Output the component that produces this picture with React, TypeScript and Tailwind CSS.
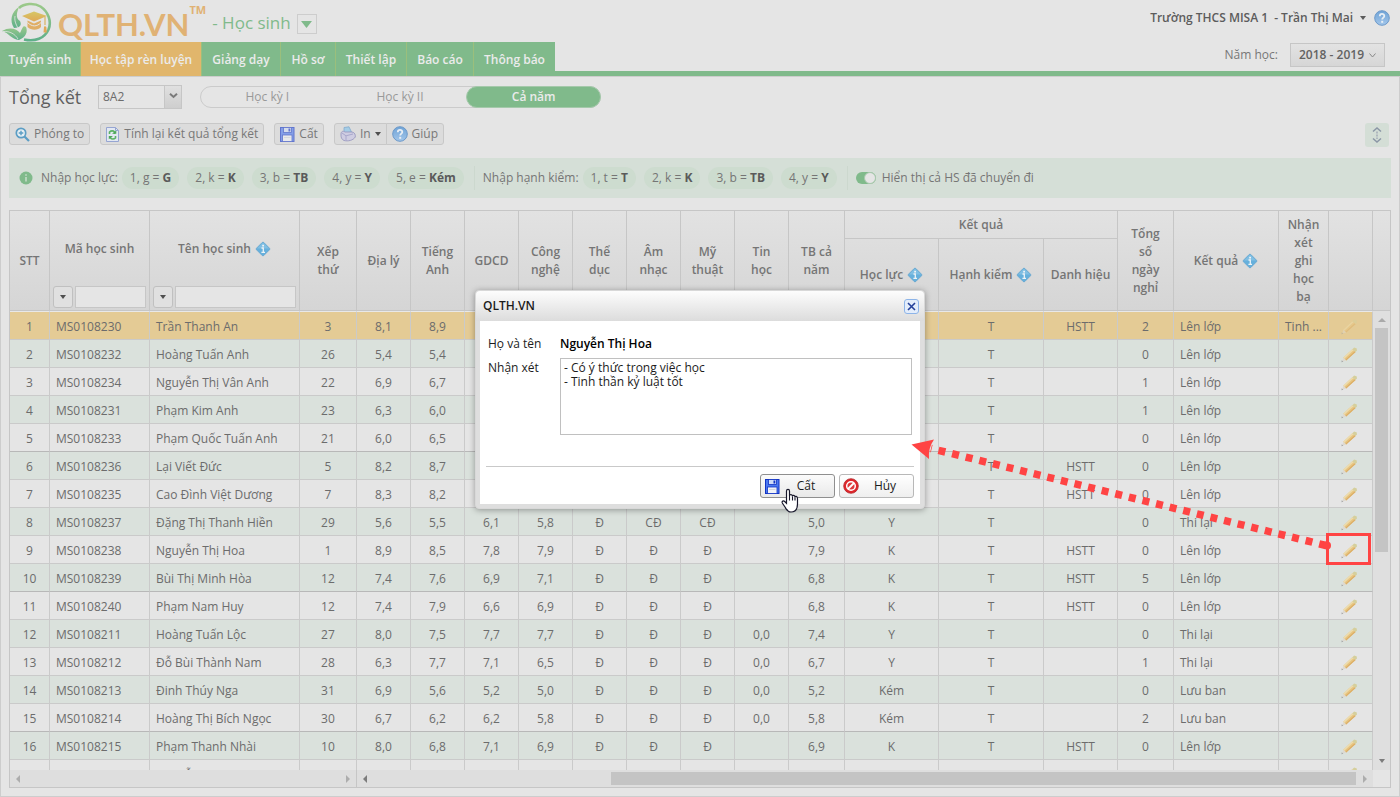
import { ReactNode } from "react";

type Row = {
    code: string;
    name: string;
    rank: string;
    marks: string[];
    result: string[];
    note?: string;
};

const tabs = [
    { label: "Tuyển sinh", width: "w-[81px]" },
    { label: "Học tập rèn luyện", width: "w-[121px]", active: true },
    { label: "Giảng dạy", width: "w-[79px]" },
    { label: "Hồ sơ", width: "w-[55px]" },
    { label: "Thiết lập", width: "w-[71px]" },
    { label: "Báo cáo", width: "w-[67px]" },
    { label: "Thông báo", width: "w-[81px]" },
];

const studyKeys = [["1, g", "G"], ["2, k", "K"], ["3, b", "TB"], ["4, y", "Y"], ["5, e", "Kém"]];
const conductKeys = [["1, t", "T"], ["2, k", "K"], ["3, b", "TB"], ["4, y", "Y"]];

const subjects = ["Địa lý", "Tiếng Anh", "GDCD", "Công nghệ", "Thể dục", "Âm nhạc", "Mỹ thuật", "Tin học"];

// marks: the eight subjects, then the average of the year
// result: study, conduct, title, days off, outcome
const rows: Row[] = [
    { code: "MS0108230", name: "Trần Thanh An", rank: "3", marks: ["8,1", "8,9", "", "", "", "", "", "", ""], result: ["", "T", "HSTT", "2", "Lên lớp"], note: "Tinh ..." },
    { code: "MS0108232", name: "Hoàng Tuấn Anh", rank: "26", marks: ["5,4", "5,4", "", "", "", "", "", "", ""], result: ["", "T", "", "0", "Lên lớp"] },
    { code: "MS0108234", name: "Nguyễn Thị Vân Anh", rank: "22", marks: ["6,9", "6,7", "", "", "", "", "", "", ""], result: ["", "T", "", "1", "Lên lớp"] },
    { code: "MS0108231", name: "Phạm Kim Anh", rank: "23", marks: ["6,3", "6,0", "", "", "", "", "", "", ""], result: ["", "T", "", "1", "Lên lớp"] },
    { code: "MS0108233", name: "Phạm Quốc Tuấn Anh", rank: "21", marks: ["6,0", "6,5", "", "", "", "", "", "", ""], result: ["", "T", "", "0", "Lên lớp"] },
    { code: "MS0108236", name: "Lại Viết Đức", rank: "5", marks: ["8,2", "8,7", "", "", "", "", "", "", ""], result: ["", "T", "HSTT", "0", "Lên lớp"] },
    { code: "MS0108235", name: "Cao Đình Việt Dương", rank: "7", marks: ["8,3", "8,2", "", "", "", "", "", "", ""], result: ["", "T", "HSTT", "0", "Lên lớp"] },
    { code: "MS0108237", name: "Đặng Thị Thanh Hiền", rank: "29", marks: ["5,6", "5,5", "6,1", "5,8", "Đ", "CĐ", "CĐ", "", "5,0"], result: ["Y", "T", "", "0", "Thi lại"] },
    { code: "MS0108238", name: "Nguyễn Thị Hoa", rank: "1", marks: ["8,9", "8,5", "7,8", "7,9", "Đ", "Đ", "Đ", "", "7,9"], result: ["K", "T", "HSTT", "0", "Lên lớp"] },
    { code: "MS0108239", name: "Bùi Thị Minh Hòa", rank: "12", marks: ["7,4", "7,6", "6,9", "7,1", "Đ", "Đ", "Đ", "", "6,8"], result: ["K", "T", "HSTT", "5", "Lên lớp"] },
    { code: "MS0108240", name: "Phạm Nam Huy", rank: "12", marks: ["7,4", "7,9", "6,6", "6,9", "Đ", "Đ", "Đ", "", "6,8"], result: ["K", "T", "HSTT", "0", "Lên lớp"] },
    { code: "MS0108211", name: "Hoàng Tuấn Lộc", rank: "27", marks: ["8,0", "7,5", "7,7", "7,7", "Đ", "Đ", "Đ", "0,0", "7,4"], result: ["Y", "T", "", "0", "Thi lại"] },
    { code: "MS0108212", name: "Đỗ Bùi Thành Nam", rank: "28", marks: ["6,3", "7,7", "7,1", "6,5", "Đ", "Đ", "Đ", "0,0", "6,7"], result: ["Y", "T", "", "1", "Thi lại"] },
    { code: "MS0108213", name: "Đinh Thúy Nga", rank: "31", marks: ["6,9", "5,6", "5,2", "5,0", "Đ", "Đ", "Đ", "0,0", "5,2"], result: ["Kém", "T", "", "0", "Lưu ban"] },
    { code: "MS0108214", name: "Hoàng Thị Bích Ngọc", rank: "30", marks: ["6,7", "6,2", "6,2", "5,8", "Đ", "Đ", "Đ", "0,0", "5,8"], result: ["Kém", "T", "", "2", "Lưu ban"] },
    { code: "MS0108215", name: "Phạm Thanh Nhài", rank: "10", marks: ["8,0", "6,8", "7,1", "6,9", "Đ", "Đ", "Đ", "", "6,9"], result: ["K", "T", "HSTT", "0", "Lên lớp"] },
];

const Logo = () => (
    <svg width="50" height="40" viewBox="0 0 50 40" className="mt-[2px]" aria-hidden="true">
        <defs>
            <linearGradient id="leaf" x1="0" y1="0" x2="0" y2="1">
                <stop offset="0" stopColor="#9cc98a" />
                <stop offset="1" stopColor="#5fb08a" />
            </linearGradient>
            <linearGradient id="cap" x1="0" y1="0" x2="0" y2="1">
                <stop offset="0" stopColor="#d6c766" />
                <stop offset="1" stopColor="#e0a857" />
            </linearGradient>
        </defs>
        <path d="M17 6 C22 1.500 32 0.500 38.500 4.500 C46 9.500 50 19 46.500 27.500 C42.500 36.500 33 40 22 37.500" fill="none" stroke="url(#leaf)" strokeWidth="2.600" />
        <path d="M17 5 C9 10 7.500 19 12 26 C18 26 20 23 18 19 C13 16 15 10 17 5Z" fill="url(#leaf)" />
        <path d="M0 29 C8 24 15 27 18 31 C21 25 21 23 24 25 C26 30 24 35 17 38 C9 37 7 31 0 29Z" fill="url(#leaf)" />
        <path d="M1 29.500 C8 29 13 32 16 37 M13 14 C12 20 15 24 18 30" stroke="#e5e5e5" strokeWidth="0.800" fill="none" />
        <path d="M20 14 L32 9.500 L45 14 L32 19.500Z" fill="url(#cap)" />
        <path d="M25.500 18.500 L32 21.500 L39 18.500 V25 C36 28.500 29 28.500 25.500 25Z" fill="#e0ae66" />
        <path d="M25.500 20.500 C30 25 35 25 39 20.500" stroke="#e5e5e5" strokeWidth="1" fill="none" />
        <path d="M43 15 V28" stroke="#d9b260" strokeWidth="1.200" strokeDasharray="8 1" />
        <path d="M42 25 H44.300 L44.800 30.500 H41.500Z" fill="#e0a857" />
    </svg>
);

const HelpIcon = () => (
    <svg width="16" height="16" viewBox="0 0 16 16" aria-hidden="true">
        <defs>
            <linearGradient id="help" x1="0" y1="0" x2="0" y2="1">
                <stop offset="0" stopColor="#6fa3d6" />
                <stop offset="1" stopColor="#a3c6ea" />
            </linearGradient>
        </defs>
        <circle cx="8" cy="8" r="7.300" fill="url(#help)" stroke="#6c99c9" />
        <path d="M5.800 6.200 C5.800 3.200 10.400 3.300 10.300 6 C10.300 7.600 8.200 7.600 8.200 9.500" fill="none" stroke="#e8eef4" strokeWidth="1.800" />
        <rect x="7.200" y="10.800" width="2" height="2" fill="#e8eef4" />
    </svg>
);

const InfoDiamond = () => (
    <svg width="16" height="16" viewBox="0 0 16 16" className="shrink-0" aria-hidden="true">
        <rect x="2.800" y="2.800" width="10.400" height="10.400" rx="1.200" transform="rotate(45 8 8)" fill="#66b0dc" stroke="#5a9fcb" strokeWidth="0.600" />
        <path d="M8 1.500 L14 7.500 H2Z" fill="#93c9e8" opacity="0.600" />
        <path d="M6.500 7 H8.300 V11 M6.400 11.300 H10" stroke="#eef3f6" strokeWidth="1.300" fill="none" />
        <rect x="7.200" y="3.800" width="1.800" height="1.700" fill="#eef3f6" />
    </svg>
);

const Pencil = ({ faded }: { faded?: boolean }) => (
    <svg width="16" height="16" viewBox="0 0 16 16" className={faded ? "opacity-50" : ""} aria-hidden="true">
        <path d="M11.300 2.200 L14.600 5 L5.200 13.600 L2.200 10.800Z" fill="#e8c581" />
        <path d="M11.300 2.200 L12.400 3.200 L3.300 11.800 L2.200 10.800Z" fill="#ecdcae" />
        <path d="M13.700 4.300 L14.600 5 L5.200 13.600 L4.300 12.800Z" fill="#dcae66" />
        <path d="M11.300 2.200 L13.200 0.600 L15.800 1.400 L15.800 3.600 L14.600 5Z" fill="#d5cf9c" />
        <path d="M2.200 10.800 L5.200 13.600 L1.400 14.600Z" fill="#ded8ce" />
        <path d="M0.700 13.200 L2.300 14.800 L0.500 15.200Z" fill="#a2a2a2" />
    </svg>
);

const Floppy = ({ dim }: { dim?: boolean }) => (
    <svg width="15" height="15" viewBox="0 0 15 15" className={dim ? "opacity-60" : ""} aria-hidden="true">
        <rect x="0.500" y="0.500" width="13.500" height="14" fill="#4a78f0" stroke="#1233c4" />
        <rect x="3.500" y="0.500" width="8" height="5" fill="#cfdcf8" stroke="#1233c4" strokeWidth="0.800" />
        <rect x="8.500" y="1.500" width="1.800" height="3" fill="#1233c4" />
        <rect x="2.500" y="8" width="9.500" height="6.500" fill="#f1f3f8" stroke="#1233c4" strokeWidth="0.800" />
        <rect x="4" y="10" width="6.500" height="1" fill="#d3d6dd" />
    </svg>
);

const Caret = ({ className }: { className?: string }) => (
    <svg width="6" height="4" viewBox="0 0 6 4" className={className} aria-hidden="true">
        <path d="M0 0 H6 L3 4Z" fill="currentColor" />
    </svg>
);

const SideArrow = ({ left, className }: { left?: boolean; className?: string }) => (
    <svg width="4" height="8" viewBox="0 0 4 8" className={className} aria-hidden="true">
        <path d={left ? "M4 0 V8 L0 4Z" : "M0 0 V8 L4 4Z"} fill="currentColor" />
    </svg>
);

const ToolButton = ({ children, className = "" }: { children: ReactNode; className?: string }) => (
    <button className={`flex h-[22px] items-center gap-1 rounded-[3px] border border-[#c8c8c8] bg-[#dcdcdc] px-[5px] ${className}`}>
        {children}
    </button>
);

const Pill = ({ keys, value }: { keys: string; value: string }) => (
    <span className="flex h-[22px] items-center whitespace-pre rounded-full bg-[#cddccf] px-2">
        {keys} = <b className="font-bold text-[#5a5a5a]">{value}</b>
    </span>
);

const Head = ({ children, className = "px-1", cols, span = 2 }: { children?: ReactNode; className?: string; cols?: number; span?: number }) => (
    <th rowSpan={span} colSpan={cols} className={`border-r border-b border-[#c6c6c6] font-semibold ${className}`}>
        {children}
    </th>
);

const FilterHead = ({ label, info }: { label: string; info?: boolean }) => (
    <Head className="px-[3px]">
        <div className="flex h-[99px] flex-col pb-[2px]">
            <div className="flex flex-1 items-center justify-center gap-1">
                {label}
                {info && <InfoDiamond />}
            </div>
            <div className="flex gap-[2px]">
                <button aria-label={`Lọc ${label}`} className="flex h-[22px] w-[20px] shrink-0 items-center justify-center rounded-[3px] border border-[#c0c0c0] bg-[#e0e0e0] text-[#4f4f4f]">
                    <Caret />
                </button>
                <input aria-label={label} className="h-[22px] min-w-0 flex-1 border border-[#c6c6c6] bg-[#e5e5e5] px-1 font-normal outline-none" />
            </div>
        </div>
    </Head>
);

const Header = () => (
    <header className="flex h-[76px] justify-between border-b-[5px] border-[#80ba8b]">
        <div className="flex flex-col">
            <div className="flex h-[42px] items-start">
                <div className="flex items-start pl-[2px]">
                    <Logo />
                    <span className="ml-[6px] font-[Lato] text-[31px] leading-[48px] font-bold text-[#e0b274]">QLTH.VN</span>
                    <span className="text-[11px] leading-[20px] font-bold text-[#e0b274]">TM</span>
                </div>
                <span className="ml-[6px] text-[17px] leading-[46px] text-[#80ba8b]">- Học sinh</span>
                <button aria-label="Chọn phân hệ" className="mt-[14px] ml-[6px] flex h-5 w-5 items-center justify-center border border-[#cdcdcd] text-[#80ba8b]">
                    <svg width="11" height="7" viewBox="0 0 11 7"><path d="M0 0 H11 L5.500 7Z" fill="currentColor" /></svg>
                </button>
            </div>
            <nav className="-mb-[5px] flex h-[34px]">
                {tabs.map((tab) => (
                    <a
                        key={tab.label}
                        href="#"
                        className={`flex h-[34px] items-center justify-center whitespace-nowrap border-r border-[#9bbf7c] pt-px font-semibold text-[#ebebeb] last:border-r-0 ${tab.width} ${tab.active ? "bg-[#e1b66c]" : "bg-[#80ba8b]"}`}
                    >
                        {tab.label}
                    </a>
                ))}
            </nav>
        </div>
        <div className="flex flex-col items-end">
            <div className="flex h-[36px] items-center gap-[6px] pr-[10px] font-semibold text-[#5c5c5c]">
                <span>Trường THCS MISA 1</span>
                <button className="flex items-center gap-[7px]">
                    - Trần Thị Mai <Caret />
                </button>
                <button aria-label="Trợ giúp" className="ml-[2px]"><HelpIcon /></button>
            </div>
            <div className="mt-[7px] flex items-center gap-3 pr-[15px] text-[#777]">
                <label htmlFor="year">Năm học:</label>
                <div className="relative">
                    <select id="year" className="h-6 w-[95px] appearance-none border border-[#c6c6c6] bg-linear-to-b from-[#e3e3e3] to-[#d6d6d6] pl-2 font-semibold text-[#626262]">
                        <option>2018 - 2019</option>
                    </select>
                    <svg width="7" height="5" viewBox="0 0 7 5" className="pointer-events-none absolute top-[10px] right-[9px]"><path d="M0.500 0.500 L3.500 4 L6.500 0.500" fill="none" stroke="#888" /></svg>
                </div>
            </div>
        </div>
    </header>
);

const Toolbar = () => (
    <>
        <div className="mt-2 flex h-6 items-center">
            <h1 className="w-[89px] shrink-0 whitespace-nowrap text-[18px] text-[#5f5f5f]">Tổng kết</h1>
            <div className="relative">
                <select aria-label="Lớp" className="h-6 w-[84px] appearance-none border border-[#c6c6c6] bg-[#e5e5e5] pl-1 text-[#6c6c6c]">
                    <option>8A2</option>
                </select>
                <span className="pointer-events-none absolute top-px right-px flex h-[22px] w-[17px] justify-center border-l border-[#c6c6c6] bg-linear-to-b from-[#e0e0e0] to-[#cecece] pt-[7px]">
                    <svg width="9" height="6" viewBox="0 0 9 6"><path d="M1 0.800 L4.500 4 L8 0.800" fill="none" stroke="#7a7a7a" strokeWidth="2" /></svg>
                </span>
            </div>
            <div className="ml-[18px] flex h-[22px] w-[401px] rounded-full border border-[#cbcbcb] text-[#999]">
                <button className="flex-1">Học kỳ I</button>
                <button className="flex-1">Học kỳ II</button>
                <button className="-my-px -mr-px flex-1 rounded-full border border-[#a5c9ab] bg-[#80ba8b] font-semibold text-[#ebebeb]">Cả năm</button>
            </div>
        </div>
        <div className="mt-[14px] flex text-[#787878]">
            <ToolButton>
                <svg width="15" height="15" viewBox="0 0 15 15"><circle cx="6" cy="6" r="4.700" fill="#e5eef3" stroke="#5b9dc4" strokeWidth="1.700" /><path d="M9.500 9.500 L14 14" stroke="#5b9dc4" strokeWidth="2.200" /><path d="M6 3.700 V8.300 M3.700 6 H8.300" stroke="#5b9dc4" strokeWidth="1.400" /></svg>
                Phóng to
            </ToolButton>
            <ToolButton className="ml-[10px]">
                <svg width="14" height="15" viewBox="0 0 14 15"><path d="M0.500 0.500 H9.500 L12.500 3.500 V14.500 H0.500Z" fill="#e2e8f2" stroke="#96a5d2" /><path d="M9.500 0.500 V3.500 H12.500" fill="none" stroke="#96a5d2" /><path d="M3.500 7 V5 C5 3.500 7.500 3.500 8.500 5 V7 M9.500 9 V11 C8 12.300 5.500 12.300 4.500 11 V9.300" fill="none" stroke="#5cb266" strokeWidth="1.600" /><path d="M6 6.800 H10.300 V3.500Z M7 9 H2.800 V12.300Z" fill="#4da85a" /></svg>
                Tính lại kết quả tổng kết
            </ToolButton>
            <ToolButton className="ml-[10px]"><Floppy dim /> Cất</ToolButton>
            <ToolButton className="ml-[10px] rounded-r-none">
                <svg width="16" height="16" viewBox="0 0 16 16"><path d="M4 1.500 L9 0.800 L11.500 6 L4 7Z" fill="#a5cde6" stroke="#7da6cc" strokeWidth="0.700" /><path d="M1 8 C1 5.500 3 4.500 5 6 L12 6 C15 6.500 15.500 9 15.300 11 C13 14.500 8 15.500 4 14.500 C1.500 13.500 0.800 11 1 8Z" fill="#cfcde2" stroke="#9a98c0" strokeWidth="0.900" /><path d="M2 7 L6 9.800 L13 8" fill="none" stroke="#a9a7cc" /><path d="M6 10 V14.500" stroke="#a9a7cc" /></svg>
                In <Caret className="text-[#4f4f4f]" />
            </ToolButton>
            <ToolButton className="-ml-px rounded-l-none"><HelpIcon />Giúp</ToolButton>
            <button aria-label="Thu gọn" className="ml-auto mr-[2px] flex h-6 w-6 items-center justify-center rounded-[3px] bg-[#d4ded6]">
                <svg width="10" height="16" viewBox="0 0 10 16"><path d="M1 4.500 L5 1 L9 4.500 M1 11.500 L5 15 L9 11.500" fill="none" stroke="#8b96a6" strokeWidth="1.500" /><path d="M5 4.500 V12" stroke="#a4acb8" strokeWidth="1.500" strokeDasharray="2 1" /></svg>
            </button>
        </div>
    </>
);

const InfoBar = () => (
    <div className="mt-[11px] flex h-10 items-center bg-[#d5dfd7] pl-[10px] text-[#757575]">
        <svg width="14" height="14" viewBox="0 0 14 14" aria-hidden="true"><circle cx="7" cy="7" r="6.500" fill="#80ba8b" /><path d="M7 6 V10.500" stroke="#dce8de" strokeWidth="1.200" /><circle cx="7" cy="4" r="0.800" fill="#dce8de" /></svg>
        <span className="ml-2">Nhập học lực:</span>
        <div className="ml-1 flex gap-2">
            {studyKeys.map(([k, v]) => <Pill key={k} keys={k} value={v} />)}
        </div>
        <span className="ml-[10px] border-l border-[#ccd8ce] py-1 pl-2">Nhập hạnh kiểm:</span>
        <div className="ml-1 flex gap-2">
            {conductKeys.map(([k, v]) => <Pill key={k} keys={k} value={v} />)}
        </div>
        <label className="ml-[10px] flex items-center gap-[6px] border-l border-[#ccd8ce] py-1 pl-2">
            <span className="relative flex">
                <input type="checkbox" defaultChecked className="peer h-3 w-5 appearance-none rounded-full bg-[#bbb] checked:bg-[#80ba8b]" />
                <span className="pointer-events-none absolute top-0 right-0 h-3 w-3 rounded-full border border-[#a9c9ae] bg-[#e5e5e5]"></span>
            </span>
            Hiển thị cả HS đã chuyển đi
        </label>
    </div>
);

const Scrollbar = () => (
    <div className="flex h-[459px] flex-col items-center bg-[#dfdfdf] py-[7px]">
        <svg width="8" height="4" viewBox="0 0 8 4"><path d="M4 0 L8 4 H0Z" fill="#aaa" /></svg>
        <div className="mt-[6px] h-[224px] w-[13px] bg-[#c4c4c4]"></div>
        <Caret className="mt-auto text-[#7c7c7c]" />
    </div>
);

const Grid = () => (
    <div className="mt-3 border-t border-b border-l border-[#c6c6c6]">
        <table className="w-full table-fixed border-separate border-spacing-0">
            <colgroup>
                <col className="w-[40px]" />
                <col className="w-[100px]" />
                <col />
                <col className="w-[57px]" />
                {subjects.map((s) => <col key={s} className="w-[54px]" />)}
                <col className="w-[56px]" />
                <col className="w-[94px]" />
                <col className="w-[105px]" />
                <col className="w-[74px]" />
                <col className="w-[56px]" />
                <col className="w-[105px]" />
                <col className="w-[50px]" />
                <col className="w-[44px]" />
                <col className="w-[18px]" />
            </colgroup>
            <thead className="bg-linear-to-b from-[#e2e2e2] to-[#d5d5d5] leading-[18px] text-[#757575]">
                <tr className="h-[28px]">
                    <Head>STT</Head>
                    <FilterHead label="Mã học sinh" />
                    <FilterHead label="Tên học sinh" info />
                    <Head className="px-3">Xếp thứ</Head>
                    {subjects.map((s) => <Head key={s} className="px-2">{s}</Head>)}
                    <Head>TB cả năm</Head>
                    <Head span={1} cols={3}>Kết quả</Head>
                    <Head className="px-3">Tổng số ngày nghỉ</Head>
                    <Head><div className="flex items-center justify-center gap-1">Kết quả <InfoDiamond /></div></Head>
                    <Head className="px-2">Nhận xét ghi học bạ</Head>
                    <Head />
                    <Head />
                </tr>
                <tr className="h-[72px]">
                    <Head span={1}><div className="flex items-center justify-center gap-1">Học lực <InfoDiamond /></div></Head>
                    <Head span={1}><div className="flex items-center justify-center gap-1">Hạnh kiểm <InfoDiamond /></div></Head>
                    <Head span={1} className="whitespace-nowrap">Danh hiệu</Head>
                </tr>
            </thead>
            <tbody className="text-center text-[#6c6c6c]">
                {rows.map((row, i) => {
                    const line = i % 5 === 4 ? "border-b-[#b8b8b8]" : "border-b-[#cacaca]";
                    const top = i === 0 ? "border-t border-t-[#e8e8e8]" : "";
                    const cell = `border-r border-b border-r-[#cacaca] pt-[2px] ${line} ${top}`;
                    return (
                        <tr
                            key={row.code}
                            className={`${i === 0 ? "h-[29px] bg-[#e4cb95]" : i % 2 === 1 ? "h-[28px] bg-[#dae1dc]" : "h-[28px]"} whitespace-nowrap`}
                        >
                            <td className={cell}>{i + 1}</td>
                            <td className={`${cell} pl-[6px] text-left`}>{row.code}</td>
                            <td className={`${cell} pl-[6px] text-left`}>{row.name}</td>
                            <td className={cell}>{row.rank}</td>
                            {row.marks.map((m, k) => <td key={k} className={cell}>{m}</td>)}
                            {row.result.map((m, k) => (
                                <td key={k} className={`${cell} ${k === 4 ? "pl-[6px] text-left" : ""}`}>{m}</td>
                            ))}
                            <td className={`${cell} pl-[6px] text-left`}>{row.note}</td>
                            <td className={cell}>
                                <button aria-label={`Sửa ${row.name}`} className="flex w-full justify-center pr-[3px]">
                                    <Pencil faded={i === 0} />
                                </button>
                            </td>
                            {i === 0 && (
                                <td rowSpan={17} className="border-r border-[#c6c6c6] align-top"><Scrollbar /></td>
                            )}
                        </tr>
                    );
                })}
                {/* top edge of the next row, cut by the scroll area */}
                <tr className="h-[10px]">
                    {Array.from({ length: 20 }, (_, k) => (
                        <td key={k} className={`border-r border-[#cacaca] align-top ${k === 2 ? "pl-[6px] text-left" : ""}`}>
                            <div className="h-[10px] overflow-hidden pt-[7px] leading-4">
                                {k === 2 && "Nguyễn"}
                                {k === 19 && <div className="flex justify-center pr-[3px]"><Pencil /></div>}
                            </div>
                        </td>
                    ))}
                </tr>
            </tbody>
        </table>
        <div className="flex h-[17px] border-r border-[#c6c6c6]">
            <div className="flex w-[347px] shrink-0 items-center justify-between border-r border-[#c6c6c6] bg-[#dedede] px-[6px] text-[#adadad]">
                <SideArrow left />
                <SideArrow />
            </div>
            <div className="flex flex-1 items-center bg-[#dedede] pr-[6px] pl-[6px] text-[#7c7c7c]">
                <SideArrow left />
                <div className="mr-[7px] ml-auto h-[13px] w-[745px] bg-[#c4c4c4]"></div>
                <SideArrow className="text-[#adadad]" />
            </div>
            <div className="w-[17px]"></div>
        </div>
    </div>
);

const Dialog = () => (
    <div className="absolute inset-x-0 top-[290px] flex justify-center">
        <div role="dialog" aria-labelledby="dialog-title" className="w-[450px] rounded-[4px] border border-[#d8d8d8] bg-[#dedede] px-1 pb-1 text-[#1c1c1c] shadow-[0_1px_6px_rgba(0,0,0,0.35)]">
            <div className="-mx-1 flex h-[30px] items-center justify-between rounded-t-[4px] bg-linear-to-b from-[#fdfdfd] to-[#dcdcdc] pr-[5px] pl-[7px]">
                <h2 id="dialog-title" className="font-semibold">QLTH.VN</h2>
                <button aria-label="Đóng" className="flex h-[15px] w-[15px] items-center justify-center rounded-[3px] border border-[#8db4e8] bg-[#e3edfb]">
                    <svg width="9" height="9" viewBox="0 0 9 9"><path d="M1 1 L8 8 M8 1 L1 8" stroke="#24409a" strokeWidth="1.600" /></svg>
                </button>
            </div>
            <div className="bg-white px-[6px] pt-3 pb-[6px]">
                <div className="flex h-[22px] items-center pl-[2px]">
                    <span className="w-[72px]">Họ và tên</span>
                    <b className="font-semibold text-black">Nguyễn Thị Hoa</b>
                </div>
                <div className="mt-[3px] flex pr-[2px] pl-[2px]">
                    <label htmlFor="remark" className="w-[72px] shrink-0 pt-[2px]">Nhận xét</label>
                    <textarea
                        id="remark"
                        className="h-[77px] flex-1 resize-none border border-[#c0c0c0] px-[3px] pt-[2px] leading-[14px] outline-none"
                        defaultValue={"- Có ý thức trong việc học\n- Tinh thần kỷ luật tốt"}
                    />
                </div>
                <div className="mt-[31px] flex justify-end gap-1 border-t border-[#c9c9c9] pt-[7px]">
                    <button className="flex h-6 w-[75px] items-center rounded-[3px] border border-[#8f8f8f] bg-linear-to-b from-[#fbfbfb] to-[#e9e9e9] pl-1">
                        <Floppy />
                        <span className="flex-1 pr-[2px]">Cất</span>
                    </button>
                    <button className="flex h-6 w-[75px] items-center rounded-[3px] border border-[#b8b8b8] bg-linear-to-b from-white to-[#efefef] pl-[3px]">
                        <svg width="16" height="16" viewBox="0 0 16 16"><circle cx="8" cy="8" r="7.300" fill="#e0262b" stroke="#b3282c" strokeWidth="0.800" /><circle cx="8" cy="8" r="4.300" fill="#dd3a3d" stroke="#fff" strokeWidth="1.500" /><path d="M5 11 L11 5" stroke="#fff" strokeWidth="1.800" /></svg>
                        <span className="flex-1 pr-[2px]">Hủy</span>
                    </button>
                </div>
            </div>
        </div>
    </div>
);

const Callout = () => (
    <>
        <div className="pointer-events-none absolute top-[533px] right-[29px] h-8 w-[45px] border-[3px] border-[#ff4444]"></div>
        <svg width="424" height="124" viewBox="0 0 424 124" className="pointer-events-none absolute top-[430px] right-[68px]" aria-hidden="true">
            <path d="M418 115.500 L23 18.500" stroke="#ff4444" strokeWidth="7.500" strokeDasharray="7 7" />
            <circle cx="419" cy="115.500" r="4" fill="#ff4444" />
            <path d="M3.500 14.500 L26 9.500 Q20 18 21 29Z" fill="#ff4444" />
        </svg>
        <svg width="18" height="26" viewBox="0 0 18 26" className="pointer-events-none absolute top-[488px] left-[781px]" aria-hidden="true">
            <path d="M5.500 3 C5.500 0.800 8.500 0.800 8.500 3 V8 C8.500 6 11.500 6 11.500 8.500 C11.500 6.800 14 7 14 9.200 C14 7.800 16.500 8 16.500 10.500 V16 C16.500 21 14 24 10 24 C6.500 24 5.500 21.500 4 19 L1.300 15 C0.500 13.200 2.500 12.300 3.700 13.500 L5.500 15.300Z" fill="#fff" stroke="#17172b" strokeWidth="1.200" />
            <path d="M8.500 8 V12.500 M11.500 8.500 V12.500 M14 9.200 V12.500" stroke="#17172b" strokeWidth="1.100" />
        </svg>
    </>
);

const App = () => {
    return (
        <div className="relative flex min-h-screen flex-col overflow-hidden bg-[#e5e5e5] font-['Open_Sans','Noto_Sans',sans-serif] text-[12px] leading-4">
            <Header />
            <main className="flex-1 border border-[#cdcdcd] px-2 pb-2">
                <Toolbar />
                <InfoBar />
                <Grid />
            </main>
            <Dialog />
            <Callout />
        </div>
    );
};

export default App;
